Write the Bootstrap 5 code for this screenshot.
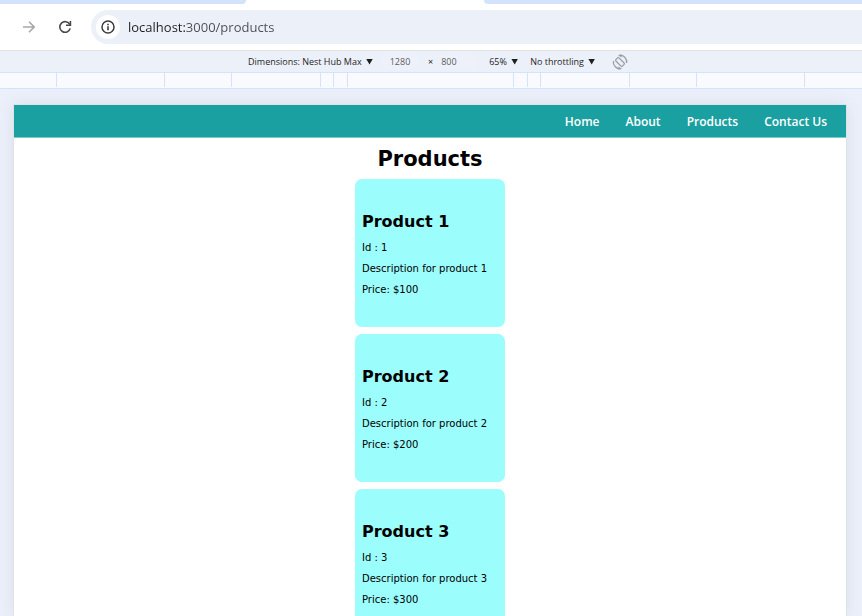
<!DOCTYPE html>
<html lang="en">
<head>
<meta charset="utf-8">
<meta name="viewport" content="width=device-width, initial-scale=1">
<title>Products</title>
<link href="https://cdn.jsdelivr.net/npm/bootstrap@5.3.0/dist/css/bootstrap.min.css" rel="stylesheet">
<style>
  body { font-family: "Open Sans", "Noto Sans", sans-serif; background: #ebf0fa; color: #1f1f1f; }
  button { color: inherit; }

  .tab-strip { height: 4px; }
  .tab-strip span { background: #d3e3fd; }
  .tabs-before { width: 246px; border-bottom-right-radius: 8px; }
  .tab-active { width: 238px; }
  .tabs-after { border-bottom-left-radius: 8px; }

  .browser-bar { padding: 6px 0 6px 19px; border-bottom: 1px solid #e1e3e1; }
  .bar-btn { width: 20px; height: 20px; }
  .address { margin-left: 16px; height: 34px; padding-left: 5px; background: #ecf0f9; border-radius: 17px 0 0 17px; }
  .site-info { width: 24px; height: 24px; }
  .address input {
    margin-left: 8px; font-size: 13px; line-height: 20px;
    color: transparent; caret-color: #1f1f1f;
    background: linear-gradient(90deg, #1f1f1f 57px, #4a4d51 57px);
    -webkit-background-clip: text; background-clip: text;
  }
  input:focus { outline: none; }

  .device-bar { height: 21px; padding-left: 248px; background: #ecf0f9; font-size: 9px; line-height: 14px; }
  .device-bar select { appearance: none; font-size: 9px; line-height: 14px; color: #1f1f1f; }
  .device-bar input { font-size: 9px; line-height: 14px; color: #5a5d61; background: #eef1f9; }
  .caret { width: 7px; height: 6px; margin-left: 4px; background: #1f1f1f; clip-path: polygon(0 0, 100% 0, 50% 100%); pointer-events: none; }
  .size-field { width: 34px; }
  .times { padding: 0 8px 0 11px; }
  .pick-device { margin-right: 10px; }
  .pick-zoom { margin-left: 14px; margin-right: 12px; }
  .rotate { margin-left: 17px; width: 16px; height: 16px; }

  .media-ruler { height: 17px; background: #f9fafe; border: solid #d3e3fd; border-width: 1px 0; padding: 0 1px 1px 0; }
  .media-ruler i { border-left: 1px solid #d3e3fd; flex: none; }
  .media-ruler .edge { border-left: 0; flex: 1 1 0; }
  .r-xl { width: 166px; } .r-lg { width: 108px; } .r-md { width: 89px; }
  .r-sm { width: 67px; } .r-xs { width: 14px; } .r-xxs { width: 13px; }

  .stage { padding: 16px 16px 0 14px; min-height: 0; }
  .device { box-shadow: 0 0 0 1px #dfe2e6, 0 0 16px rgba(80, 80, 90, .12); font-family: "DejaVu Sans", Verdana, sans-serif; color: #000; }
  .site-nav { background: #1ba0a1; border-bottom: 1px solid #7ccaca; height: 33px; padding: 2px 19px 0; gap: 26px; }
  .site-nav a { font: 600 12px/20px "Open Sans", "Noto Sans", sans-serif; color: #fff; }
  h1 { font-size: 21px; line-height: 26px; font-weight: 700; margin: 8px 0 7px; }
  .products { gap: 7px; }
  .product { width: 150px; height: 148px; padding: 5px 7px 0; border-radius: 7px; background: #9cfdfd; flex: none; }
  .product h2 { font-size: 16px; line-height: 22px; font-weight: 700; margin: 0 0 4px; }
  .product p { font-size: 10px; line-height: 21px; margin: 0; white-space: nowrap; }
</style>
</head>
<body class="vh-100 d-flex flex-column overflow-hidden">
  <header class="bg-white">
    <div class="tab-strip d-flex">
      <span class="tabs-before"></span>
      <div class="tab-active"></div>
      <span class="tabs-after flex-grow-1"></span>
    </div>
    <div class="browser-bar d-flex align-items-center">
      <button type="button" class="bar-btn btn p-0 border-0 d-flex" aria-label="Forward" disabled>
        <svg width="20" height="20" viewBox="0 0 20 20" fill="none" stroke="#77787a" stroke-width="1.6"><path d="M4 10h11M10 4.8l5.2 5.2-5.2 5.2"/></svg>
      </button>
      <button type="button" class="bar-btn btn p-0 border-0 d-flex ms-3" aria-label="Reload">
        <svg width="20" height="20" viewBox="0 0 20 20"><path d="M14.8 7.5A5.3 5.3 0 1 0 15.2 11.4" fill="none" stroke="#474747" stroke-width="1.6"/><path d="M16.2 4v5h-5.2V7.4h3.6V4z" fill="#474747"/></svg>
      </button>
      <div class="address d-flex align-items-center flex-grow-1">
        <button type="button" class="site-info btn p-0 border-0 rounded-circle bg-white d-flex align-items-center justify-content-center" aria-label="Site information">
          <svg width="16" height="16" viewBox="0 0 16 16"><circle cx="8" cy="8" r="6" fill="none" stroke="#3c3c3c" stroke-width="1.5"/><path d="M7.2 7.2h1.6v4H7.2zM7.2 4.7h1.6v1.5H7.2z" fill="#3c3c3c"/></svg>
        </button>
        <input type="text" class="border-0 p-0 flex-grow-1" aria-label="Address" value="localhost:3000/products">
      </div>
    </div>
    <div class="device-bar d-flex align-items-center">
      <label class="pick-device d-flex align-items-center">
        <select class="border-0 p-0 bg-transparent" aria-label="Device"><option>Dimensions: Nest Hub Max</option></select><span class="caret"></span>
      </label>
      <input class="size-field border-0 p-0 text-center" type="text" aria-label="Width" value="1280">
      <span class="times">×</span>
      <input class="size-field border-0 p-0" type="text" aria-label="Height" value="800">
      <label class="pick-zoom d-flex align-items-center">
        <select class="border-0 p-0 bg-transparent" aria-label="Zoom"><option>65%</option></select><span class="caret"></span>
      </label>
      <label class="d-flex align-items-center">
        <select class="border-0 p-0 bg-transparent" aria-label="Throttling"><option>No throttling</option></select><span class="caret"></span>
      </label>
      <button type="button" class="rotate btn p-0 border-0 d-flex" aria-label="Rotate">
        <svg width="16" height="16" viewBox="0 0 16 16" fill="none" stroke="#9b9fa8" stroke-width="1.3"><rect x="5.8" y="3.4" width="4.4" height="9.2" rx="1" transform="rotate(-45 8 8)"/><path d="M7 1.3A6.7 6.7 0 0 1 14.6 9M9 14.7A6.7 6.7 0 0 1 1.4 7"/><path d="M6 1.2 9.6.6v3zM10 14.8l-3.6.6v-3z" fill="#9b9fa8" stroke="none"/></svg>
      </button>
    </div>
    <div class="media-ruler d-flex" aria-hidden="true">
      <i class="edge"></i><i class="r-lg"></i><i class="r-sm"></i><i class="r-md"></i><i class="r-xxs"></i><i class="r-xs"></i><i class="r-xl"></i><i class="r-xs"></i><i class="r-xxs"></i><i class="r-md"></i><i class="r-sm"></i><i class="r-lg"></i><i></i><i class="edge"></i>
    </div>
  </header>
  <div class="stage flex-grow-1 d-flex flex-column">
    <div class="device bg-white flex-grow-1 overflow-hidden">
      <nav class="site-nav d-flex align-items-center justify-content-end">
        <a href="#" class="text-decoration-none">Home</a>
        <a href="#" class="text-decoration-none">About</a>
        <a href="#" class="text-decoration-none">Products</a>
        <a href="#" class="text-decoration-none">Contact Us</a>
      </nav>
      <main>
        <h1 class="text-center">Products</h1>
        <div class="products d-flex flex-column align-items-center">
          <article class="product d-flex flex-column justify-content-center">
            <h2>Product 1</h2><p>Id : 1</p><p>Description for product 1</p><p>Price: $100</p>
          </article>
          <article class="product d-flex flex-column justify-content-center">
            <h2>Product 2</h2><p>Id : 2</p><p>Description for product 2</p><p>Price: $200</p>
          </article>
          <article class="product d-flex flex-column justify-content-center">
            <h2>Product 3</h2><p>Id : 3</p><p>Description for product 3</p><p>Price: $300</p>
          </article>
        </div>
      </main>
    </div>
  </div>
<script src="https://cdn.jsdelivr.net/npm/bootstrap@5.3.0/dist/js/bootstrap.bundle.min.js"></script>
</body>
</html>
